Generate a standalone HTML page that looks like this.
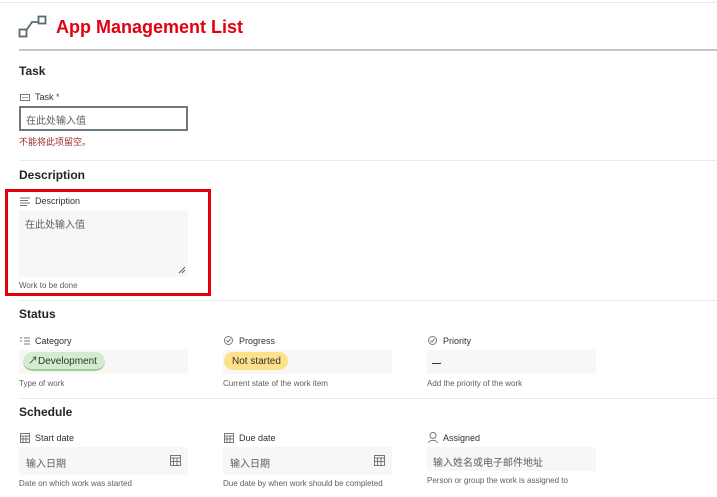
<!DOCTYPE html>
<html><head><meta charset="utf-8"><style>
*{margin:0;padding:0;box-sizing:border-box}
body{width:717px;height:497px;background:#fff;position:relative;overflow:hidden;font-family:"Liberation Sans","Noto Sans CJK SC",sans-serif;color:#323130}
.a{position:absolute;white-space:nowrap}
.h{font-size:12px;font-weight:bold;color:#252423}
.l{font-size:9px;color:#323130}
.s{font-size:8px;color:#605e5c}
.f{background:#f8f7f5;position:absolute}
.ph{font-size:10px;color:#605e5c}
.hr{position:absolute;left:19px;right:0;height:1px;background:#edebe9}
</style></head><body>
<div class="a" style="left:0;right:0;top:2px;height:1px;background:#edebe9"></div>
<svg class="a" style="left:18px;top:15px" width="30" height="24" viewBox="0 0 30 24" fill="none" stroke="#5a6a72" stroke-width="1.8"><rect x="1.5" y="14.5" width="7" height="7"/><path d="M8.5 15 L14 7 L20 7"/><rect x="20.5" y="1.5" width="7" height="7"/></svg>
<div class="a" style="left:56px;top:17px;font-size:18px;font-weight:bold;color:#e3000f">App Management List</div>
<div class="a" style="left:19px;right:0;top:49px;height:2px;background:#c8c6c4"></div>

<div class="a h" style="left:19px;top:64px">Task</div>
<svg class="a" style="left:20px;top:94px" width="10" height="7"><rect x="0.5" y="0.5" width="9" height="6" fill="none" stroke="#777"/><path d="M2 3.5H8" stroke="#999"/></svg>
<div class="a l" style="left:35px;top:92px">Task <span style="color:#a4262c">*</span></div>
<div class="a" style="left:19px;top:106px;width:169px;height:25px;border:2px solid #6b7a80;background:#fff"></div>
<div class="a ph" style="left:26px;top:112px">在此处输入值</div>
<div class="a" style="left:19px;top:135px;font-size:9px;color:#a4262c">不能将此项留空。</div>

<div class="hr" style="top:160px"></div>
<div class="a h" style="left:19px;top:168px">Description</div>
<div class="a" style="left:5px;top:189px;width:206px;height:107px;border:3px solid #e3000f"></div>
<svg class="a" style="left:20px;top:197px" width="10" height="9" stroke="#777" stroke-width="1"><path d="M0 1H10M0 3.5H8M0 6H10M0 8.5H7"/></svg>
<div class="a l" style="left:35px;top:196px">Description</div>
<div class="f" style="left:19px;top:210px;width:169px;height:67px"></div>
<svg class="a" style="left:178px;top:266px" width="8" height="8" stroke="#666"><path d="M1 7L7 1M4 7L7 4"/></svg>
<div class="a ph" style="left:25px;top:216px">在此处输入值</div>
<div class="a s" style="left:19px;top:281px">Work to be done</div>

<div class="hr" style="top:300px"></div>
<div class="a h" style="left:19px;top:307px">Status</div>
<svg class="a" style="left:20px;top:337px" width="10" height="8" stroke="#777"><path d="M4 1H10M4 4H10M4 7H10M0 1H2M0 4H2"/></svg>
<div class="a l" style="left:35px;top:336px">Category</div>
<div class="f" style="left:19px;top:350px;width:169px;height:24px"></div>
<div class="a" style="left:23px;top:352px;height:19px;width:82px;border-radius:10px;background:#d3ecd0;border-bottom:2px solid #9fcf99;font-size:10px;line-height:18px;padding-left:5px;color:#323130"><span style="position:relative;top:1px">↗Development</span></div>
<div class="a s" style="left:19px;top:379px">Type of work</div>

<svg class="a" style="left:224px;top:336px" width="9" height="9" fill="none" stroke="#777"><circle cx="4.5" cy="4.5" r="4"/><path d="M2.5 4.5L4 6L6.5 3"/></svg>
<div class="a l" style="left:239px;top:336px">Progress</div>
<div class="f" style="left:223px;top:350px;width:169px;height:24px"></div>
<div class="a" style="left:224px;top:352px;height:18px;width:64px;border-radius:9px;background:#fde08a;font-size:10px;line-height:18px;padding-left:8px;color:#323130"><span style="position:relative;top:1px">Not started</span></div>
<div class="a s" style="left:223px;top:379px">Current state of the work item</div>

<svg class="a" style="left:428px;top:336px" width="9" height="9" fill="none" stroke="#777"><circle cx="4.5" cy="4.5" r="4"/><path d="M2.5 4.5L4 6L6.5 3"/></svg>
<div class="a l" style="left:443px;top:336px">Priority</div>
<div class="f" style="left:427px;top:350px;width:169px;height:24px"></div>
<div class="a" style="left:432px;top:363px;width:9px;height:1px;background:#323130"></div>
<div class="a s" style="left:427px;top:379px">Add the priority of the work</div>

<div class="hr" style="top:398px"></div>
<div class="a h" style="left:19px;top:405px">Schedule</div>

<svg class="a" style="left:20px;top:433px" width="10" height="10" fill="none" stroke="#777"><rect x="0.5" y="0.5" width="9" height="9"/><path d="M0.5 3H9.5M3 3V9.5M6 3V9.5M0.5 6H9.5"/></svg>
<div class="a l" style="left:35px;top:433px">Start date</div>
<div class="f" style="left:19px;top:447px;width:169px;height:28px"></div>
<div class="a ph" style="left:26px;top:455px">输入日期</div>
<svg class="a" style="left:170px;top:455px" width="11" height="11" fill="none" stroke="#777"><rect x="0.5" y="0.5" width="10" height="10"/><path d="M0.5 3H10.5M3.5 3V10.5M7 3V10.5M0.5 6.5H10.5"/></svg>
<div class="a s" style="left:19px;top:479px">Date on which work was started</div>

<svg class="a" style="left:224px;top:433px" width="10" height="10" fill="none" stroke="#777"><rect x="0.5" y="0.5" width="9" height="9"/><path d="M0.5 3H9.5M3 3V9.5M6 3V9.5M0.5 6H9.5"/></svg>
<div class="a l" style="left:239px;top:433px">Due date</div>
<div class="f" style="left:223px;top:447px;width:169px;height:28px"></div>
<div class="a ph" style="left:230px;top:455px">输入日期</div>
<svg class="a" style="left:374px;top:455px" width="11" height="11" fill="none" stroke="#777"><rect x="0.5" y="0.5" width="10" height="10"/><path d="M0.5 3H10.5M3.5 3V10.5M7 3V10.5M0.5 6.5H10.5"/></svg>
<div class="a s" style="left:223px;top:479px">Due date by when work should be completed</div>

<svg class="a" style="left:428px;top:432px" width="10" height="11" fill="none" stroke="#777"><circle cx="5" cy="3.5" r="3"/><path d="M0.5 11C1 7.5 9 7.5 9.5 11"/></svg>
<div class="a l" style="left:443px;top:433px">Assigned</div>
<div class="f" style="left:427px;top:447px;width:169px;height:24px"></div>
<div class="a ph" style="left:433px;top:454px">输入姓名或电子邮件地址</div>
<div class="a s" style="left:427px;top:476px">Person or group the work is assigned to</div>
</body></html>
